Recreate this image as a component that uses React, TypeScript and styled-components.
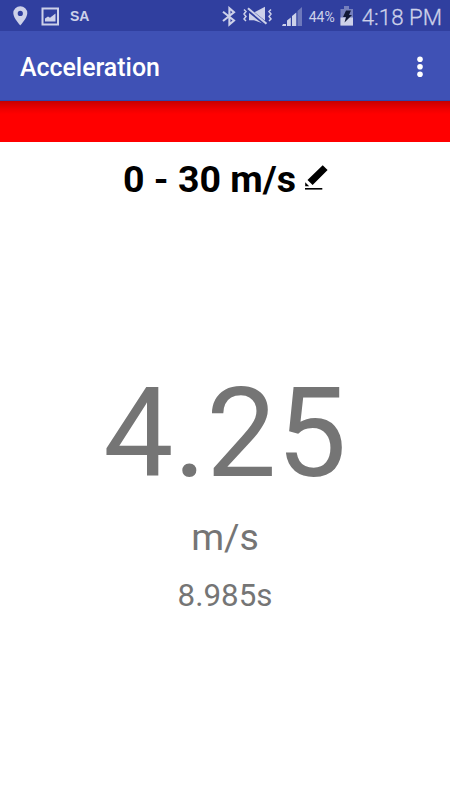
import React from "react";
import styled, { createGlobalStyle } from "styled-components";

const GlobalStyle = createGlobalStyle`
  * { box-sizing: border-box; }
  body { margin: 0; background: #fff; font-family: Roboto, sans-serif; }
  svg { display: block; flex: none; }
`;

const Screen = styled.div`
  width: 450px;
  height: 800px;
  display: flex;
  flex-direction: column;
  overflow: hidden;
  background: #fff;
`;

const StatusBar = styled.header`
  height: 31px;
  flex: none;
  display: flex;
  align-items: center;
  justify-content: space-between;
  padding: 1px 8px 0 13px;
  background: #303f9f;
  color: #cdd1e9;
`;

const StatusGroup = styled.div`
  display: flex;
  align-items: center;
  height: 30px;
`;

const Carrier = styled.span`
  margin-left: 10px;
  font: 700 14px/30px "Liberation Sans", Arial, sans-serif;
`;

const Battery = styled.span`
  margin-left: 6px;
  width: 31px;
  padding-top: 1px;
  font: 400 14px/30px Roboto, sans-serif;
`;

const Clock = styled.time`
  margin-left: 8px;
  padding-top: 1px;
  font: 300 22.3px/30px Roboto, sans-serif;
  -webkit-text-stroke: 0.3px currentColor;
  white-space: nowrap;
`;

const AppBar = styled.nav`
  height: 70px;
  flex: none;
  display: flex;
  align-items: center;
  justify-content: space-between;
  padding: 2px 26px 0 20px;
  background: #3f51b5;
  border-bottom: 1px solid #3048a8;
`;

const Title = styled.h1`
  margin: 0;
  padding-top: 2px;
  color: #fff;
  font: 500 24.9px/32px Roboto, sans-serif;
`;

const MenuButton = styled.button`
  border: 0;
  padding: 0;
  background: none;
  color: #fff;
`;

const Banner = styled.div`
  height: 41px;
  flex: none;
  background: linear-gradient(#c40000 0, #d60000 3px, #ee0000 8px, #ff0000 13px);
`;

const Content = styled.main`
  flex: 1;
  display: flex;
  flex-direction: column;
  align-items: center;
`;

const RangeRow = styled.div`
  display: flex;
  align-items: center;
  height: 44px;
  margin-top: 15px;
  padding-left: 1px;
`;

const Range = styled.h2`
  margin: 0;
  color: #000;
  font: 700 37.5px/44px Roboto, sans-serif;
  white-space: nowrap;
`;

const Reading = styled.div<{ $size: number; $gap: number }>`
  margin-top: ${(p) => p.$gap}px;
  color: #757575;
  font-size: ${(p) => p.$size}px;
  line-height: 1.2;
`;

const PinIcon = () => (
  <svg width="15" height="20" viewBox="0 0 15 20" fill="currentColor">
    <path fillRule="evenodd" d="M7.3.3a7 7 0 0 0-7 7c0 4.7 7 12.2 7 12.2s7-7.5 7-12.2a7 7 0 0 0-7-7Zm0 4.5a2.6 2.6 0 1 1 0 5.2 2.6 2.6 0 0 1 0-5.2Z" />
  </svg>
);

const PictureIcon = styled(({ className }: { className?: string }) => (
  <svg className={className} width="19" height="19" viewBox="0 0 19 19">
    <rect x="1.5" y="1.5" width="15.5" height="16" fill="none" stroke="currentColor" strokeWidth="2" />
    <path d="M4 14.5v-3l3-2 2 1.2 5.5-4.2v8Z" fill="currentColor" />
  </svg>
))`
  margin-left: 13px;
`;

const BluetoothIcon = () => (
  <svg width="14" height="21" viewBox="0 0 14 21" fill="none" stroke="currentColor" strokeWidth="2.1">
    <path d="m1 5.7 11 8.8-4.6 4V2.2l4.6 4L1 15" />
  </svg>
);

const MuteIcon = styled(({ className }: { className?: string }) => (
  <svg className={className} width="30" height="20" viewBox="0 0 30 20" fill="none" stroke="currentColor">
    <path d="M6 6.5h5l11-5.7v17.4l-11-4H6Z" fill="currentColor" stroke="none" />
    <path d="m4 2.8 20 16" stroke="#303f9f" strokeWidth="4" />
    <path d="m5 2.3 18.5 15.5" strokeWidth="2.1" />
    <path d="m1 3.5 2 2-2 2.5 2 2.5-2 2.5 2 2M28 3.5l-2 2 2 2.5-2 2.5 2 2.5-2 2" strokeWidth="1.5" />
  </svg>
))`
  margin-left: 7px;
`;

const SignalIcon = styled(({ className }: { className?: string }) => (
  <svg className={className} width="21" height="21" viewBox="0 0 21 21" fill="currentColor">
    <path d="M1 18h3v2H0ZM5 14.5l3.8-3V20H5ZM10 10l4.3-3.5V20H10Z" />
    <path d="m15.5 5 4.5-4v19h-4.5Z" opacity=".4" />
  </svg>
))`
  margin-left: 9px;
`;

const BatteryIcon = () => (
  <svg width="14" height="20" viewBox="0 0 14 20">
    <path d="M4 0h5v3h4v16.5H.5V3H4Z" fill="#7680bd" />
    <path d="M.5 11.5H13v8H.5Z" fill="#cdd1e9" />
    <path d="M6 4.5h5L9 9h3L4.5 16.5 6 11H3Z" fill="#111936" />
  </svg>
);

const MoreIcon = () => (
  <svg width="8" height="22" viewBox="0 0 8 22" fill="currentColor">
    <circle cx="4" cy="3.3" r="2.8" />
    <circle cx="4" cy="10.8" r="2.8" />
    <circle cx="4" cy="18.3" r="2.8" />
  </svg>
);

const PencilIcon = styled(({ className }: { className?: string }) => (
  <svg className={className} width="23" height="26" viewBox="0 0 23 26">
    <path d="m17.7.2 4.9 4.9L7.6 20.1 2.5 15ZM.2 17.2l4 4H.2Z" />
    <path d="M0 23h17.3v1.6H0Z" />
  </svg>
))`
  margin: 0 0 2px 9px;
`;

export default function App() {
  return (
    <Screen>
      <GlobalStyle />
      <StatusBar>
        <StatusGroup>
          <PinIcon />
          <PictureIcon />
          <Carrier>SA</Carrier>
        </StatusGroup>
        <StatusGroup>
          <BluetoothIcon />
          <MuteIcon />
          <SignalIcon />
          <Battery>44%</Battery>
          <BatteryIcon />
          <Clock>4:18 PM</Clock>
        </StatusGroup>
      </StatusBar>
      <AppBar>
        <Title>Acceleration</Title>
        <MenuButton aria-label="More options"><MoreIcon /></MenuButton>
      </AppBar>
      <Banner />
      <Content>
        <RangeRow>
          <Range>0 - 30 m/s</Range>
          <PencilIcon />
        </RangeRow>
        <Reading $size={125} $gap={158}>4.25</Reading>
        <Reading $size={37.5} $gap={6}>m/s</Reading>
        <Reading $size={31.3} $gap={17}>8.985s</Reading>
      </Content>
    </Screen>
  );
}
